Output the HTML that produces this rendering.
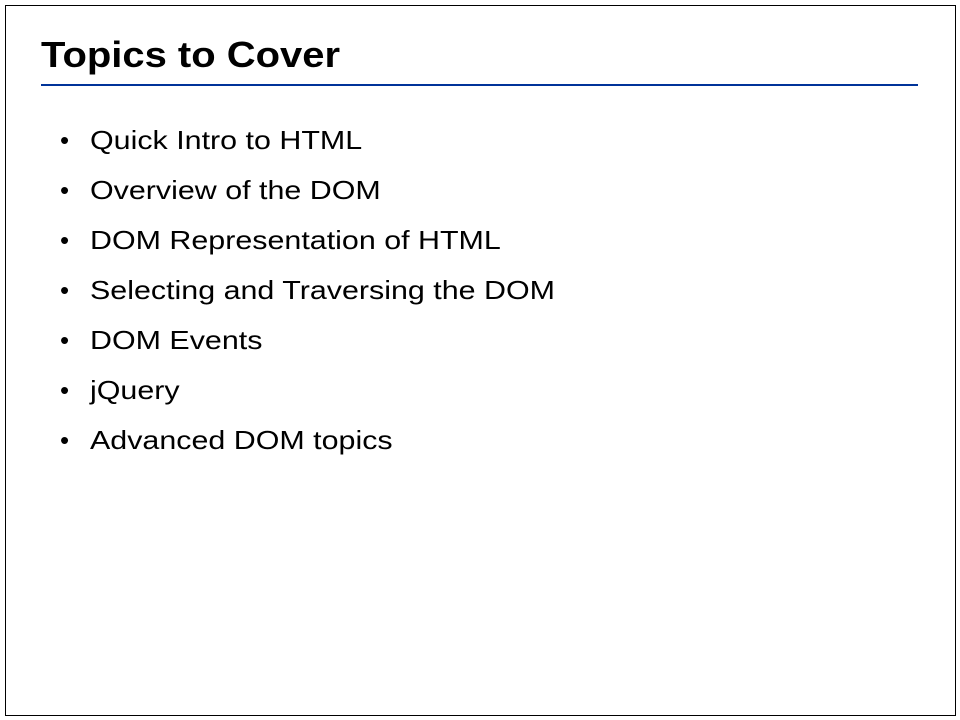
<!DOCTYPE html>
<html><head><style>
body{margin:0;width:960px;height:720px;background:#fff;position:relative;overflow:hidden;font-family:"Liberation Sans",Arial,sans-serif;color:#000}
.frame{position:absolute;left:5px;top:5px;width:951px;height:711px;border:1px solid #000;box-sizing:border-box}
h1{position:absolute;left:41px;top:30px;margin:0;font-size:36px;font-weight:bold;line-height:50px;white-space:nowrap;transform:scaleX(1.11);transform-origin:0 0}
.rule{position:absolute;left:41px;top:84px;width:877px;height:2px;background:#003399}
.li{position:absolute;left:90px;font-size:26px;line-height:30px;white-space:nowrap;transform:scaleX(1.17);transform-origin:0 0}
.b{position:absolute;left:60px;font-size:26px;line-height:30px}
</style></head><body>
<div class="frame"></div>
<h1>Topics to Cover</h1>
<div class="rule"></div>
<div class="b" style="top:125px">•</div><div class="li" style="top:125px">Quick Intro to HTML</div>
<div class="b" style="top:175px">•</div><div class="li" style="top:175px">Overview of the DOM</div>
<div class="b" style="top:225px">•</div><div class="li" style="top:225px">DOM Representation of HTML</div>
<div class="b" style="top:275px">•</div><div class="li" style="top:275px">Selecting and Traversing the DOM</div>
<div class="b" style="top:325px">•</div><div class="li" style="top:325px">DOM Events</div>
<div class="b" style="top:375px">•</div><div class="li" style="top:375px">jQuery</div>
<div class="b" style="top:425px">•</div><div class="li" style="top:425px">Advanced DOM topics</div>
</body></html>
